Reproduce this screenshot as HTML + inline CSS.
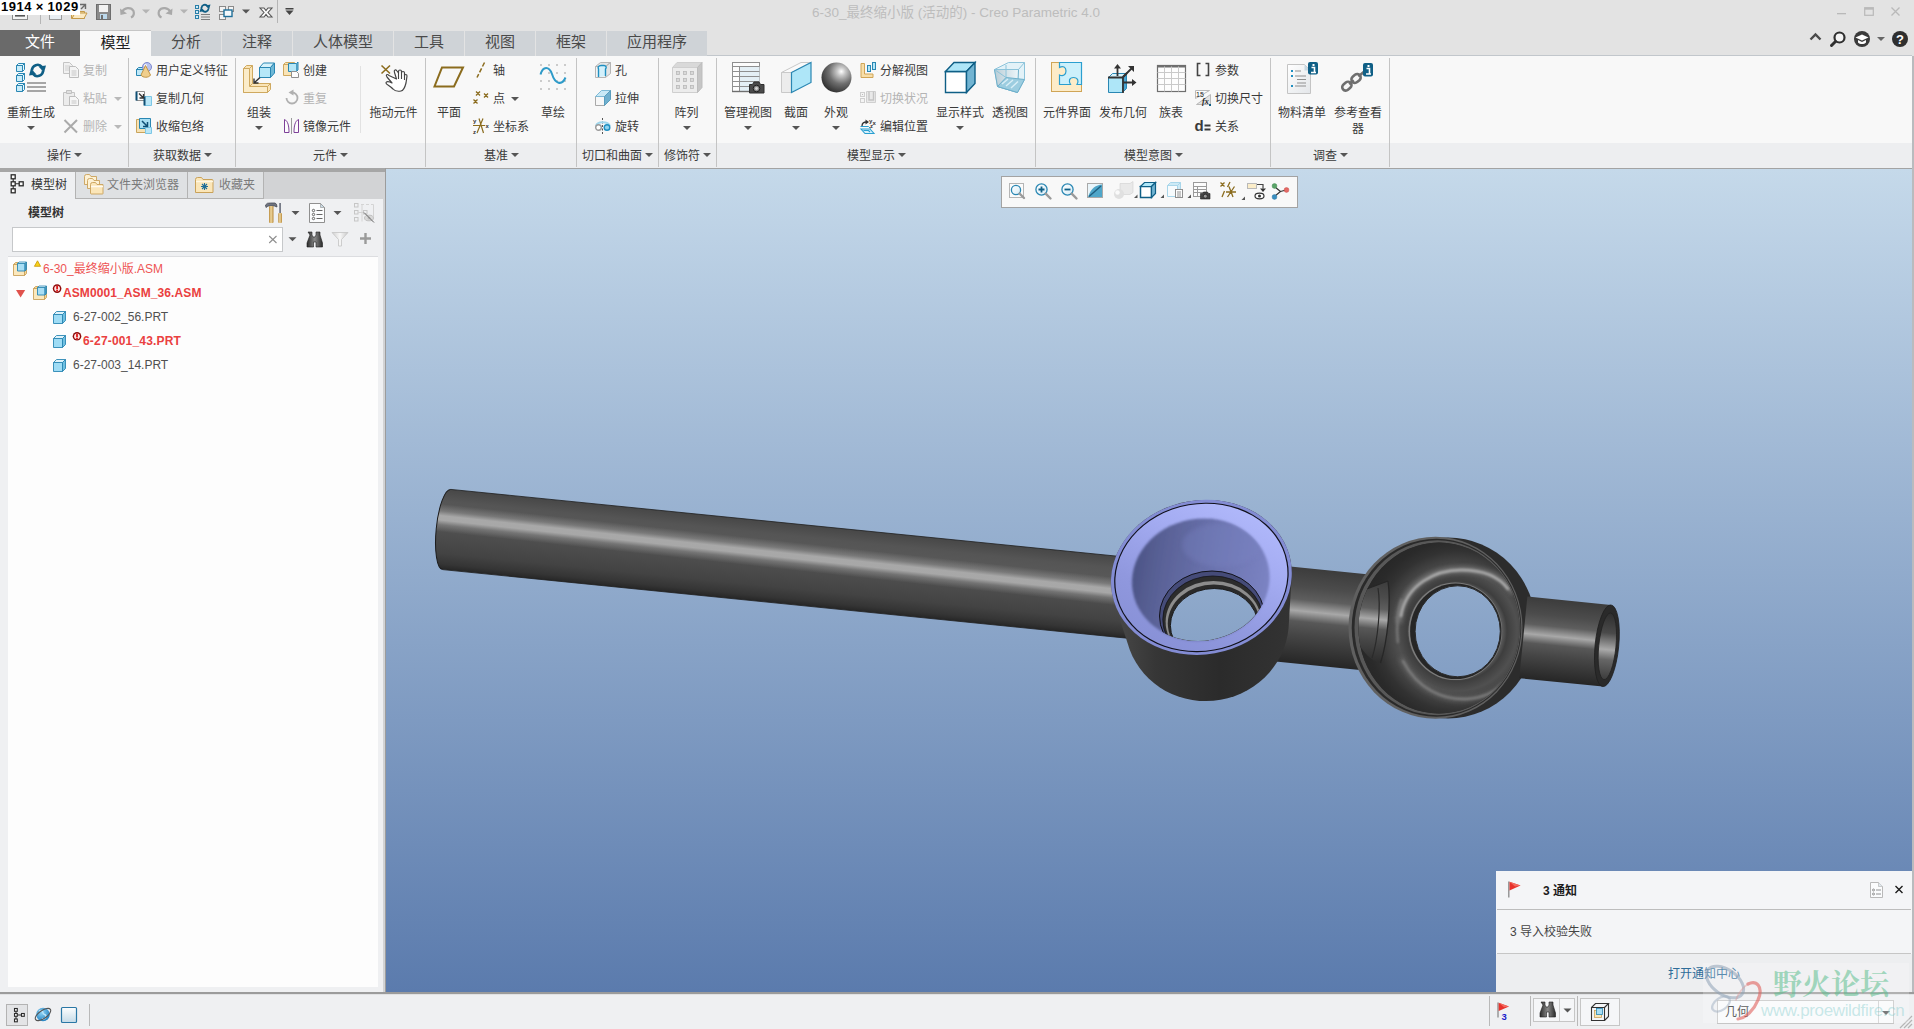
<!DOCTYPE html>
<html lang="zh-CN">
<head>
<meta charset="utf-8">
<title>6-30_最终缩小版 (活动的) - Creo Parametric 4.0</title>
<style>
*{box-sizing:border-box;margin:0;padding:0}
html,body{width:1914px;height:1029px;overflow:hidden;background:#e3e3e3}
body{position:relative;font-family:"Liberation Sans","Noto Sans CJK SC",sans-serif;font-size:12px;color:#333;line-height:1}
.abs{position:absolute}
.t{position:absolute;white-space:nowrap;font-size:12px;line-height:14px;color:#3a3a3a}
.dis{color:#b4b4b4}
svg{position:absolute;overflow:visible}
#titlebar{left:0;top:0;width:1914px;height:30px;background:#e3e3e3}
#tabbar{left:0;top:30px;width:1914px;height:26px;background:#e3e3e3}
.tab{position:absolute;top:31px;height:25px;background:#cfd3d7;font-size:15px;line-height:22px;text-align:center;color:#4a4a4a}
#ribbon{left:0;top:56px;width:1912px;height:87px;background:#f8f8f8}
#riblabel{left:0;top:143px;width:1912px;height:25px;background:#edeef0}
.gsep{position:absolute;top:58px;width:1px;height:109px;background:#c4c4c4}
.glab{position:absolute;top:148px;font-size:12px;line-height:14px;color:#3a3a3a;white-space:nowrap}
.arr{position:absolute;width:0;height:0;border-left:4px solid transparent;border-right:4px solid transparent;border-top:4px solid #555}
.arr.d{border-top-color:#b9b9b9}
#leftpanel{left:0;top:168px;width:386px;height:825px;background:#eff0f2}
#viewport{left:386px;top:169px;width:1526px;height:823px;background:linear-gradient(#c5d9ea 0%,#5b7bad 100%)}
#status{left:0;top:994px;width:1914px;height:35px;background:#eff0f2}
</style>
</head>
<body>
<div class="abs" id="titlebar"></div>
<div class="abs" id="tabbar"></div>
<div class="abs" id="ribbon"></div>
<div class="abs" id="riblabel"></div>
<div class="abs" id="leftpanel"></div>
<div class="abs" id="viewport"></div>
<div class="abs" id="status"></div>
<!-- title bar -->
<div class="t" style="left:812px;top:5px;width:288px;font-size:13.500px;line-height:15px;color:#bdbdbd;text-align:center;letter-spacing:0px">6-30_最终缩小版 (活动的) - Creo Parametric 4.0</div>
<svg style="left:0;top:0" width="300" height="30" viewBox="0 0 300 30">
  <!-- creo icon remnant -->
  <rect x="12.5" y="6.5" width="15" height="13" fill="#f4f4f4" stroke="#8a8a8a"/>
  <rect x="15" y="15" width="10" height="1.6" fill="#555"/>
  <rect x="40" y="4" width="1" height="20" fill="#b5b5b5"/>
  <!-- new -->
  <rect x="49.5" y="4.500" width="12" height="15" fill="#e8eef3" stroke="#9a9a9a"/>
  <!-- open folder -->
  <path d="M71.500 18.500 L71.500 9.500 L76 9.500 L77.500 11.500 L84.500 11.500 L84.500 18.500 Z" fill="#f3d9a0" stroke="#c49a4a"/>
  <path d="M72 18.500 L75 13 L87 13 L84 18.500 Z" fill="#fbeac4" stroke="#c49a4a"/>
  <path d="M80 4.500 L85.500 4.500 L85.500 9 M85.500 4.500 L81 9" stroke="#6a6a6a" stroke-width="1.400" fill="none"/>
  <!-- save -->
  <rect x="96.500" y="4.500" width="14" height="15" fill="#8a8a8a" stroke="#6e6e6e"/>
  <rect x="99" y="5" width="9" height="7" fill="#f2f2f2"/>
  <rect x="100" y="14" width="7" height="5" fill="#bcd9ec"/>
  <rect x="101" y="15" width="2" height="4" fill="#6e6e6e"/>
  <!-- undo -->
  <path d="M122 12 C124 7.500 131 6.500 133.500 11 C134.500 14 133 16.500 131 17.500" fill="none" stroke="#a9a9a9" stroke-width="2.200"/>
  <path d="M120 8.500 L120.500 15 L127 13.500 Z" fill="#a9a9a9"/>
  <path d="M142 9.500 L150 9.500 L146 13.500 Z" fill="#b4b4b4"/>
  <!-- redo -->
  <path d="M170.500 12 C168.500 7.500 161.500 6.500 159 11 C158 14 159.500 16.500 161.500 17.500" fill="none" stroke="#a9a9a9" stroke-width="2.200"/>
  <path d="M172.500 8.500 L172 15 L165.500 13.500 Z" fill="#a9a9a9"/>
  <path d="M180 9.500 L188 9.500 L184 13.500 Z" fill="#b4b4b4"/>
  <!-- regenerate -->
  <rect x="195.500" y="5.500" width="3" height="3" fill="#cfeaf7" stroke="#2a7fa8"/>
  <rect x="195.500" y="10.500" width="3" height="3" fill="#cfeaf7" stroke="#2a7fa8"/>
  <rect x="195.500" y="15.500" width="3" height="3" fill="#cfeaf7" stroke="#2a7fa8"/>
  <path d="M201.500 8 A3.400 3.400 0 0 1 207.500 6 M208.500 8.500 A3.400 3.400 0 0 1 202.500 10.500" stroke="#0f5f86" stroke-width="1.800" fill="none"/>
  <path d="M205.500 5.500 L210.500 4.500 L209 9.500 Z M204.500 11 L199.500 12 L201 7 Z" fill="#0f5f86"/>
  <path d="M201 14.500 H210 M201 17 H210 M201 19.500 H210" stroke="#7d7d7d" stroke-width="1"/>
  <!-- windows -->
  <rect x="219.500" y="6.500" width="6" height="5" fill="#f4f4f4" stroke="#8a8a8a"/>
  <rect x="219.500" y="14.500" width="6" height="5" fill="#f4f4f4" stroke="#8a8a8a"/>
  <rect x="228.500" y="6.500" width="5" height="5" fill="#f4f4f4" stroke="#8a8a8a"/>
  <rect x="224" y="10" width="8" height="6.500" fill="#f4f9fc" stroke="#1f6f99" stroke-width="1.400"/>
  <path d="M242 9.500 L250 9.500 L246 13.500 Z" fill="#555"/>
  <!-- close -->
  <path d="M260 8 L264 8 L266 10.500 L268 8 L272 8 L268 12.500 L272 17 L268 17 L266 14.500 L264 17 L260 17 L264 12.500 Z" fill="#fdfdfd" stroke="#555" stroke-width="1.100"/>
  <rect x="277" y="0" width="1" height="23" fill="#b5b5b5"/>
  <rect x="285.500" y="8" width="8" height="1.500" fill="#444"/>
  <path d="M285.500 10.500 L293.500 10.500 L289.500 15 Z" fill="#444"/>
</svg>
<!-- window controls -->
<svg style="left:1830px;top:0" width="84" height="30" viewBox="0 0 84 30">
  <rect x="7" y="13" width="9" height="1.300" fill="#b9b9b9"/>
  <rect x="34.700" y="7.700" width="8.600" height="7.600" fill="none" stroke="#b9b9b9" stroke-width="1.200"/>
  <rect x="34.700" y="7.700" width="8.600" height="2" fill="#b9b9b9"/>
  <path d="M61.500 7.500 L69.500 15.500 M69.500 7.500 L61.500 15.500" stroke="#b9b9b9" stroke-width="1.300"/>
</svg>
<!-- right-side help icons -->
<svg style="left:1800px;top:28px" width="114" height="26" viewBox="0 0 114 26">
  <path d="M10.500 11.500 L15.500 6.500 L20.500 11.500" stroke="#4a4a4a" stroke-width="2.400" fill="none"/>
  <circle cx="39.500" cy="9.500" r="5" fill="#f4f4f4" stroke="#2f2f2f" stroke-width="2.200"/>
  <path d="M35.500 13.500 L31.500 17.500" stroke="#2f2f2f" stroke-width="3" stroke-linecap="round"/>
  <circle cx="62" cy="11" r="8" fill="#3a3a3a"/>
  <path d="M55.500 9.500 L62 6.500 L68.500 9.500 L62 12.500 Z" fill="#fff"/>
  <path d="M58 12 L58 14.500 C60 16.500 64 16.500 66 14.500 L66 12 L62 14 Z" fill="#fff"/>
  <path d="M77 9 L85 9 L81 13 Z" fill="#666"/>
  <circle cx="100" cy="11" r="8" fill="#2f2f2f"/>
  <text x="100" y="15.500" font-family="Liberation Sans,sans-serif" font-weight="bold" font-size="13" fill="#fff" text-anchor="middle">?</text>
</svg>

<!-- ribbon tabs -->
<div class="tab" style="left:0;top:30px;height:26px;width:80px;background:#6a6a6a;color:#fff;line-height:24px">文件</div>
<div class="tab" style="left:80px;top:30px;height:26px;width:71px;background:#f8f8f8;color:#222;border-top:1px solid #c6c6c6;line-height:23px">模型</div>
<div class="tab" style="left:151px;width:70px">分析</div>
<div class="tab" style="left:222px;width:70px">注释</div>
<div class="tab" style="left:293px;width:100px">人体模型</div>
<div class="tab" style="left:394px;width:70px">工具</div>
<div class="tab" style="left:465px;width:70px">视图</div>
<div class="tab" style="left:536px;width:70px">框架</div>
<div class="tab" style="left:607px;width:100px">应用程序</div>
<div class="abs" style="left:707px;top:55px;width:1205px;height:1px;background:#c2c7cc"></div>
<div class="abs" style="left:1912px;top:56px;width:2px;height:937px;background:#b9bbbe"></div>
<div class="abs" style="left:0;top:168px;width:1912px;height:1px;background:#a3a3a3"></div>

<div class="gsep" style="left:128px"></div>
<div class="gsep" style="left:235px"></div>
<div class="gsep" style="left:425px"></div>
<div class="gsep" style="left:576px"></div>
<div class="gsep" style="left:658px"></div>
<div class="gsep" style="left:716px"></div>
<div class="gsep" style="left:1035px"></div>
<div class="gsep" style="left:1270px"></div>
<div class="gsep" style="left:1389px"></div>
<div class="abs" style="left:360px;top:66px;width:1px;height:67px;background:#e2e2e2"></div>
<div class="t " style="left:47px;top:149px;">操作</div>
<div class="arr " style="left:74px;top:153px"></div>
<div class="t " style="left:153px;top:149px;">获取数据</div>
<div class="arr " style="left:204px;top:153px"></div>
<div class="t " style="left:313px;top:149px;">元件</div>
<div class="arr " style="left:340px;top:153px"></div>
<div class="t " style="left:484px;top:149px;">基准</div>
<div class="arr " style="left:511px;top:153px"></div>
<div class="t " style="left:582px;top:149px;">切口和曲面</div>
<div class="arr " style="left:645px;top:153px"></div>
<div class="t " style="left:664px;top:149px;">修饰符</div>
<div class="arr " style="left:703px;top:153px"></div>
<div class="t " style="left:847px;top:149px;">模型显示</div>
<div class="arr " style="left:898px;top:153px"></div>
<div class="t " style="left:1124px;top:149px;">模型意图</div>
<div class="arr " style="left:1175px;top:153px"></div>
<div class="t " style="left:1313px;top:149px;">调查</div>
<div class="arr " style="left:1340px;top:153px"></div>
<svg style="left:15px;top:62px" width="32" height="32" viewBox="0 0 32 32">
<g fill="#c9ecf9" stroke="#2a87b3" stroke-width="1"><path d="M1.500 3.500h6v6h-6z"/><path d="M1.500 3.500l2-2h6l-2 2z M7.500 3.500l2-2v6l-2 2z" fill="#e9f7fc"/>
<path d="M1.500 13.500h6v6h-6z"/><path d="M1.500 13.500l2-2h6l-2 2z M7.500 13.500l2-2v6l-2 2z" fill="#e9f7fc"/>
<path d="M1.500 23.500h6v6h-6z"/><path d="M1.500 23.500l2-2h6l-2 2z M7.500 23.500l2-2v6l-2 2z" fill="#e9f7fc"/></g>
<path d="M17 8.500 A5.600 5.600 0 0 1 27 5" fill="none" stroke="#0f5f86" stroke-width="2.600"/>
<path d="M23.500 4.500 L31 3.500 L29 10.500 Z" fill="#0f5f86"/>
<path d="M28 8.500 A5.600 5.600 0 0 1 18 12" fill="none" stroke="#0f5f86" stroke-width="2.600"/>
<path d="M21.500 12.500 L14 13.500 L16 6.500 Z" fill="#0f5f86"/>
<path d="M12 21h19M12 25h19M12 29h19" stroke="#8a8a8a" stroke-width="1.600"/></svg>
<div class="t " style="left:-9.0px;top:106px;width:80px;text-align:center">重新生成</div>
<div class="arr " style="left:27px;top:126px"></div>
<svg style="left:63px;top:62px" width="16" height="16" viewBox="0 0 16 16"><path d="M0.500 0.500h6l3 3v8h-9z" fill="#f1f1f1" stroke="#c4c4c4"/><path d="M2 4h5M2 6h5M2 8h5" stroke="#d0d0d0"/>
<path d="M6.500 4.500h6l3 3v8h-9z" fill="#f4f4f4" stroke="#bdbdbd"/><path d="M8.500 9h5M8.500 11h5M8.500 13h5" stroke="#c6c6c6"/></svg>
<div class="t dis" style="left:83px;top:64px;">复制</div>
<svg style="left:63px;top:90px" width="16" height="16" viewBox="0 0 16 16"><path d="M0.500 2.500h11v13h-11z" fill="#ececec" stroke="#c4c4c4"/><path d="M3.500 0.500h5v3h-5z" fill="#e0e0e0" stroke="#c0c0c0"/>
<path d="M6.500 6.500h6l3 3v6h-9z" fill="#f6f6f6" stroke="#bdbdbd"/><path d="M8.500 11h5M8.500 13h5" stroke="#c6c6c6"/></svg>
<div class="t dis" style="left:83px;top:92px;">粘贴</div>
<div class="arr d" style="left:114px;top:97px"></div>
<svg style="left:63px;top:118px" width="16" height="16" viewBox="0 0 16 16"><path d="M1.500 2 L14 14.500 M14 2 L1.500 14.500" stroke="#aaaaaa" stroke-width="2"/></svg>
<div class="t dis" style="left:83px;top:120px;">删除</div>
<div class="arr d" style="left:114px;top:125px"></div>
<svg style="left:136px;top:62px" width="16" height="16" viewBox="0 0 16 16"><path d="M0.500 7.500h7v6h-7z M0.500 7.500l2-2h7l-2 2z M7.500 7.500l2-2v6l-2 2z" fill="#bfe8f8" stroke="#2a87b3"/>
<circle cx="11" cy="5" r="4.500" fill="#b9c2ee" stroke="#7d88cf"/><circle cx="9.500" cy="3.500" r="1.500" fill="#fff" opacity=".8"/>
<path d="M9.500 3.500 L5 13 C6.500 16 13 16 14.500 13 Z" fill="#f0cf8d" stroke="#c19545"/></svg>
<div class="t " style="left:156px;top:64px;">用户定义特征</div>
<svg style="left:136px;top:90px" width="16" height="16" viewBox="0 0 16 16"><path d="M0.500 1.500h8v9h-8z" fill="#fafafa" stroke="#8f8f8f"/><path d="M0.500 1.500v9" stroke="#0f4f74" stroke-width="2"/>
<path d="M8.500 6.500h7v9h-7z" fill="#b9e6f7" stroke="#7cc7e6"/><path d="M8.500 6.500v9" stroke="#0f4f74" stroke-width="2"/>
<path d="M3 3.500l4 4M7.500 4v4h-4" stroke="#333" stroke-width="1.300" fill="none"/></svg>
<div class="t " style="left:156px;top:92px;">复制几何</div>
<svg style="left:136px;top:118px" width="16" height="16" viewBox="0 0 16 16"><path d="M0.500 1.500h10v13h-10z" fill="#f7e2b4" stroke="#c9a45c"/>
<path d="M3.500 0.500h11v10h-11z" fill="#a9dff3" stroke="#2a87b3"/><path d="M9.500 9.500h6v6h-6z" fill="#b9e6f7" stroke="#7cc7e6"/>
<path d="M6 3l5 5M11.500 4v4.500h-4.500" stroke="#0f4f74" stroke-width="1.500" fill="none"/></svg>
<div class="t " style="left:156px;top:120px;">收缩包络</div>
<svg style="left:243px;top:62px" width="32" height="32" viewBox="0 0 32 32"><path d="M0.500 6.500 L3.500 3.500 L9.500 3.500 L9.500 21.500 L27.500 21.500 L27.500 27.500 L24.500 30.500 L0.500 30.500 Z" fill="#f9e4b7" stroke="#cfa95f"/>
<path d="M0.500 6.500h6v18h18v6 M6.500 6.500l3-3 M6.500 24.500l3-3 M24.500 24.500l3-3" fill="none" stroke="#cfa95f"/>
<path d="M6.500 6.500v18h18v6h-24v-24z" fill="#fbecc9" stroke="#cfa95f"/>
<path d="M16.500 5.500h11v10h-11z" fill="#b5e7f8" stroke="#2a87b3"/><path d="M16.500 5.500l4-4.500h11l-4 4.500z" fill="#d6f2fb" stroke="#2a87b3"/><path d="M27.500 5.500l4-4.500v10l-4 4.500z" fill="#6fb8d6" stroke="#2a87b3"/>
<path d="M17 15.500 L11.500 20.500 M11 16.500 v4.500 h4.500" stroke="#333" stroke-width="1.400" fill="none"/></svg>
<div class="t " style="left:219.0px;top:106px;width:80px;text-align:center">组装</div>
<div class="arr " style="left:255px;top:126px"></div>
<svg style="left:283px;top:62px" width="16" height="16" viewBox="0 0 16 16"><path d="M0.500 2.500h9v11h-9z M0.500 2.500l2-2h9l-2 2" fill="#f9e4b7" stroke="#cfa95f"/>
<path d="M5.500 1.500h8v8h-8z" fill="#b5e7f8" stroke="#2a87b3"/><path d="M13.500 1.500l1.500-1.500v8l-1.500 1.500" fill="#6fb8d6" stroke="#2a87b3"/>
<path d="M8.500 9.500h5l2 2v4h-7z" fill="#fdfdfd" stroke="#8f8f8f"/></svg>
<div class="t " style="left:303px;top:64px;">创建</div>
<svg style="left:284px;top:90px" width="16" height="16" viewBox="0 0 16 16"><path d="M8 2.500 A5.500 5.500 0 1 1 2.500 8" fill="none" stroke="#b0b0b0" stroke-width="1.800"/><path d="M9.500 -0.500 L9.500 5.500 L4.500 2.500Z" fill="#b0b0b0"/></svg>
<div class="t dis" style="left:303px;top:92px;">重复</div>
<svg style="left:284px;top:118px" width="16" height="16" viewBox="0 0 16 16"><path d="M0.500 1.500 C4 3 5 8 5 14.500 L0.500 14.500 Z" fill="#fdfdfd" stroke="#7d3f98"/><path d="M14.500 1.500 C11 3 10 8 10 14.500 L14.500 14.500 Z" fill="#fdfdfd" stroke="#7d3f98"/><path d="M7.500 0v16" stroke="#9a9a9a"/></svg>
<div class="t " style="left:303px;top:120px;">镜像元件</div>
<svg style="left:378px;top:62px" width="32" height="32" viewBox="0 0 32 32"><path d="M3.500 3.500 L12 11.500 M12 3.500 L3.500 11.500" stroke="#8b6c1e" stroke-width="1.600"/>
<path d="M11 13.500 C9 11.500 7.500 13 9 15 L14 21 C11 19.500 8 19 8 21 C8 22.500 12 23.500 15 27 C17 29.500 20 29.500 23 29 C26 28.500 27 25 28 21 L29 14 C29 12 26.500 12 26.500 14 L26.500 11 C26.500 9 23.500 9 23.500 11 L23.500 9.500 C23.500 7.500 20.500 7.500 20.500 9.500 L20.500 11 L19 9 C18 7 15.500 8 16.500 10.500 L18.500 17 Z" fill="#fff" stroke="#444" stroke-width="1.200" stroke-linejoin="round"/>
<path d="M20.500 11v6 M23.500 11v6 M26.500 14v4" stroke="#444" stroke-width="1.100"/></svg>
<div class="t " style="left:353.5px;top:106px;width:80px;text-align:center">拖动元件</div>
<svg style="left:433px;top:62px" width="32" height="32" viewBox="0 0 32 32"><path d="M9 5.500 L30 5.500 L21 24.500 L1.500 24.500 Z" fill="none" stroke="#8b6c1e" stroke-width="2"/></svg>
<div class="t " style="left:409.0px;top:106px;width:80px;text-align:center">平面</div>
<svg style="left:473px;top:62px" width="16" height="16" viewBox="0 0 16 16"><path d="M11.500 0.500 L4 15.500" stroke="#8b6c1e" stroke-width="1.500" stroke-dasharray="4.500 2"/></svg>
<div class="t " style="left:493px;top:64px;">轴</div>
<svg style="left:473px;top:90px" width="16" height="16" viewBox="0 0 16 16"><path d="M3 1.500l4 4m0-4l-4 4 M11 3.500l4 4m0-4l-4 4 M0.500 9.500l4 4m0-4l-4 4" stroke="#8b6c1e" stroke-width="1.300"/></svg>
<div class="t " style="left:493px;top:92px;">点</div>
<div class="arr " style="left:511px;top:97px"></div>
<svg style="left:473px;top:118px" width="16" height="16" viewBox="0 0 16 16"><path d="M0 7.500h12 M4 15 L10 0.500 M6 0.500 L10.500 15" stroke="#8b6c1e" stroke-width="1.200"/>
<text x="0" y="5" font-size="6" font-family="Liberation Sans" font-weight="bold" fill="#333">y</text><text x="12.500" y="10" font-size="6" font-family="Liberation Sans" font-weight="bold" fill="#333">x</text><text x="0" y="15.500" font-size="6" font-family="Liberation Sans" font-weight="bold" fill="#333">z</text></svg>
<div class="t " style="left:493px;top:120px;">坐标系</div>
<svg style="left:539px;top:62px" width="30" height="30" viewBox="0 0 30 30"><rect x="1.5" y="2.5" width="1" height="1" fill="#444"/><rect x="1.5" y="10.5" width="1" height="1" fill="#444"/><rect x="1.5" y="18.5" width="1" height="1" fill="#444"/><rect x="1.5" y="26.5" width="1" height="1" fill="#444"/><rect x="9.5" y="2.5" width="1" height="1" fill="#444"/><rect x="9.5" y="10.5" width="1" height="1" fill="#444"/><rect x="9.5" y="18.5" width="1" height="1" fill="#444"/><rect x="9.5" y="26.5" width="1" height="1" fill="#444"/><rect x="17.5" y="2.5" width="1" height="1" fill="#444"/><rect x="17.5" y="10.5" width="1" height="1" fill="#444"/><rect x="17.5" y="18.5" width="1" height="1" fill="#444"/><rect x="17.5" y="26.5" width="1" height="1" fill="#444"/><rect x="25.5" y="2.5" width="1" height="1" fill="#444"/><rect x="25.5" y="10.5" width="1" height="1" fill="#444"/><rect x="25.5" y="18.5" width="1" height="1" fill="#444"/><rect x="25.5" y="26.5" width="1" height="1" fill="#444"/><path d="M1.500 12.500 C4 4 10 4 13 12 C16 22 23 24 26.500 15.500" fill="none" stroke="#2e9bc9" stroke-width="2"/></svg>
<div class="t " style="left:513.0px;top:106px;width:80px;text-align:center">草绘</div>
<svg style="left:595px;top:62px" width="16" height="16" viewBox="0 0 16 16"><path d="M0.500 4.500h10v11h-10z" fill="#f4f4f4" stroke="#b5b5b5"/><path d="M0.500 4.500l5-4h10l-5 4z M10.500 4.500l5-4v11l-5 4z" fill="#e4e4e4" stroke="#b5b5b5"/>
<path d="M3.500 15 V7 C2.500 5.500 3.500 3.500 6 3.500 H9 C11 3.500 12 5.500 10.500 7 V14" fill="#d3f0fb" stroke="#1f8fc1" stroke-width="1.400"/></svg>
<div class="t " style="left:615px;top:64px;">孔</div>
<svg style="left:595px;top:90px" width="16" height="16" viewBox="0 0 16 16"><path d="M0.500 6.500h9v9h-9z" fill="#f7f7f7" stroke="#a9a9a9"/><path d="M0.500 6.500l6-6h9l-6 6z" fill="#c9e9f6" stroke="#7fbad6"/><path d="M9.500 6.500l6-6v9l-6 6z" fill="#6fb0cf" stroke="#5a9dbd"/></svg>
<div class="t " style="left:615px;top:92px;">拉伸</div>
<svg style="left:595px;top:118px" width="16" height="16" viewBox="0 0 16 16"><path d="M7.500 0v16" stroke="#555" stroke-dasharray="2 1.500"/><path d="M1 8 C2 3 13 3 15 8" fill="none" stroke="#9fd6ec" stroke-width="2"/>
<circle cx="3.500" cy="9.500" r="2.800" fill="#fff" stroke="#9a9a9a" stroke-width="1.400"/><circle cx="12" cy="9.500" r="2.800" fill="#8fd3ee" stroke="#1f8fc1" stroke-width="1.400"/></svg>
<div class="t " style="left:615px;top:120px;">旋转</div>
<svg style="left:672px;top:62px" width="31" height="31" viewBox="0 0 31 31"><path d="M0.500 5.500h25v25h-25z" fill="#ececec" stroke="#cfcfcf"/><path d="M0.500 5.500l4.500-5h25l-4.500 5z" fill="#d9d9d9" stroke="#cfcfcf"/><path d="M25.500 5.500l4.500-5v25l-4.500 5z" fill="#c6c6c6" stroke="#bdbdbd"/><rect x="4.5" y="9.5" width="3" height="3" fill="#d9d9d9" stroke="#b9b9b9" stroke-width=".8"/><rect x="4.5" y="16.5" width="3" height="3" fill="#d9d9d9" stroke="#b9b9b9" stroke-width=".8"/><rect x="4.5" y="23.5" width="3" height="3" fill="#d9d9d9" stroke="#b9b9b9" stroke-width=".8"/><rect x="11.5" y="9.5" width="3" height="3" fill="#d9d9d9" stroke="#b9b9b9" stroke-width=".8"/><rect x="11.5" y="16.5" width="3" height="3" fill="#d9d9d9" stroke="#b9b9b9" stroke-width=".8"/><rect x="11.5" y="23.5" width="3" height="3" fill="#d9d9d9" stroke="#b9b9b9" stroke-width=".8"/><rect x="18.5" y="9.5" width="3" height="3" fill="#d9d9d9" stroke="#b9b9b9" stroke-width=".8"/><rect x="18.5" y="16.5" width="3" height="3" fill="#d9d9d9" stroke="#b9b9b9" stroke-width=".8"/><rect x="18.5" y="23.5" width="3" height="3" fill="#d9d9d9" stroke="#b9b9b9" stroke-width=".8"/></svg>
<div class="t " style="left:646.5px;top:106px;width:80px;text-align:center">阵列</div>
<div class="arr " style="left:683px;top:126px"></div>
<svg style="left:732px;top:62px" width="33" height="33" viewBox="0 0 33 33"><rect x="0.500" y="0.500" width="27" height="29" fill="#fcfcfc" stroke="#8f8f8f"/><rect x="8" y="4.500" width="19.500" height="25" fill="#e4eff5"/>
<path d="M0.500 4.500h27M0.500 9.500h27M0.500 14.500h27M0.500 19.500h27M0.500 24.500h27M7.500 4.500v25" stroke="#8f8f8f"/><path d="M0 29.500h28" stroke="#6f6f6f" stroke-width="1.400"/>
<path d="M17.500 22.500h3l1.500-2.500h5l1.500 2.500h3.500v8.500h-14.500z" fill="#4a4a4a" stroke="#2f2f2f"/><circle cx="24.500" cy="26.500" r="3.300" fill="#8a8a8a" stroke="#1f1f1f"/><circle cx="24.500" cy="26.500" r="1.400" fill="#d5d5d5"/></svg>
<div class="t " style="left:708.0px;top:106px;width:80px;text-align:center">管理视图</div>
<div class="arr " style="left:744px;top:126px"></div>
<svg style="left:781px;top:62px" width="31" height="31" viewBox="0 0 31 31"><path d="M0.500 10.500h10v20h-10z" fill="#ececec" stroke="#c9c9c9"/><path d="M0.500 10.500l19.500-10h10l-19.500 10z" fill="#fafafa" stroke="#c9c9c9"/>
<path d="M10.500 10.500l19.500-10v20l-19.500 10z" fill="#aee6f8" stroke="#2a87b3" stroke-width="1.200"/></svg>
<div class="t " style="left:756.0px;top:106px;width:80px;text-align:center">截面</div>
<div class="arr " style="left:792px;top:126px"></div>
<svg style="left:821px;top:62px" width="31" height="31" viewBox="0 0 31 31"><defs><radialGradient id="sph" cx="66%" cy="30%" r="75%"><stop offset="0" stop-color="#ffffff"/><stop offset=".18" stop-color="#c9c9c9"/><stop offset=".55" stop-color="#6f6f6f"/><stop offset="1" stop-color="#2f2f2f"/></radialGradient></defs><circle cx="15.500" cy="15.500" r="15" fill="url(#sph)"/></svg>
<div class="t " style="left:796.0px;top:106px;width:80px;text-align:center">外观</div>
<div class="arr " style="left:832px;top:126px"></div>
<svg style="left:860px;top:62px" width="16" height="16" viewBox="0 0 16 16"><path d="M1 1.500h3.500v10.500h8.500v3.500h-12z" fill="#f7deaa" stroke="#d0a556"/><rect x="7.500" y="3.500" width="3" height="6" fill="#b5e7f8" stroke="#2a87b3"/><rect x="12.500" y="0.500" width="3" height="7" fill="#b5e7f8" stroke="#2a87b3"/></svg>
<div class="t " style="left:880px;top:64px;">分解视图</div>
<svg style="left:860px;top:90px" width="16" height="16" viewBox="0 0 16 16"><rect x="0.500" y="2.500" width="4" height="4" fill="#f4f4f4" stroke="#cfcfcf"/><rect x="0.500" y="8.500" width="4" height="4" fill="#f4f4f4" stroke="#cfcfcf"/><rect x="2" y="4" width="1" height="1" fill="#bdbdbd"/>
<path d="M6.500 1.500h9v11h-9z" fill="#e9e9e9" stroke="#d0d0d0"/><path d="M9 1.500v8.500h4.500v-8.500" fill="none" stroke="#c4c4c4" stroke-width="1.400"/></svg>
<div class="t dis" style="left:880px;top:92px;">切换状况</div>
<svg style="left:860px;top:118px" width="16" height="16" viewBox="0 0 16 16"><path d="M1 11h9l4 4.500h-9z M3.500 12.500h5l1.500 1.500" fill="#d6f0fb" stroke="#2a9fd0" stroke-width="1.100"/><path d="M0.500 8.500h8l2 2" fill="none" stroke="#2a9fd0"/>
<path d="M2 8 C2 5 4 4 6.500 4" fill="none" stroke="#333" stroke-width="1.300"/><path d="M5.500 1.500 L9 4 L5.500 6.500Z" fill="#333"/>
<text x="9" y="4.500" font-size="6" font-family="Liberation Sans" font-weight="bold" fill="#333">y</text><text x="12.500" y="7" font-size="6" font-family="Liberation Sans" font-weight="bold" fill="#333">x</text><text x="10" y="10" font-size="6" font-family="Liberation Sans" font-weight="bold" fill="#333">z</text></svg>
<div class="t " style="left:880px;top:120px;">编辑位置</div>
<svg style="left:945px;top:62px" width="31" height="31" viewBox="0 0 31 31"><path d="M0.500 9.500h21v21h-21z" fill="#ffffff" stroke="#0f5f86" stroke-width="1.400"/><path d="M0.500 9.500l8.500-9h21l-8.500 9z" fill="#aee6f8" stroke="#0f5f86" stroke-width="1.400"/><path d="M21.500 9.500l8.500-9v21l-8.500 9z" fill="#72b4d2" stroke="#0f5f86" stroke-width="1.400"/></svg>
<div class="t " style="left:920.0px;top:106px;width:80px;text-align:center">显示样式</div>
<div class="arr " style="left:956px;top:126px"></div>
<svg style="left:994px;top:62px" width="32" height="32" viewBox="0 0 32 32"><defs><linearGradient id="pv1" x1="0" y1="0" x2="1" y2="0"><stop offset="0" stop-color="#b9cdd6"/><stop offset="1" stop-color="#edf6fa"/></linearGradient></defs>
<path d="M0.500 7.500 L14.500 0.500 L30.500 0.500 L30.500 17.500 L23.500 30.500 L3.500 24.500 Z" fill="#e3f2f8" stroke="#8cc3da"/>
<path d="M0.500 7.500 L24.500 7.500 L23.500 30.500 L3.500 24.500Z" fill="url(#pv1)" stroke="#6fb0cb"/><path d="M3.500 24.500 L12 15.500 L30.500 17.500 L23.500 30.500Z" fill="#9ccde0" stroke="#6fb0cb"/>
<path d="M12 15.500 L12 3 M12 15.500 L0.500 7.500 M24.500 7.500 L30.500 0.500 M24.500 7.500 L0.500 7.500" fill="none" stroke="#8cc3da"/><path d="M8 22l6-5 M12 24l7-6 M17 26l7-6.500" stroke="#d9eef6" stroke-width="1.400"/></svg>
<div class="t " style="left:970.0px;top:106px;width:80px;text-align:center">透视图</div>
<svg style="left:1051px;top:62px" width="32" height="32" viewBox="0 0 32 32"><rect x="0.500" y="0.500" width="30" height="29" fill="#fdecc8" stroke="#d0a556"/>
<path d="M8.500 0.500 H30.500 V22.500 H26 C28 19 27 15.500 22.500 15.500 C18 15.500 17.500 19 19.500 22.500 H8.500 V13 C12 14.500 15 13 15 9 C15 5 12 3.500 8.500 5.500 Z" fill="#ccf0fb" stroke="#2a9fd0" stroke-width="1.200"/></svg>
<div class="t " style="left:1027.0px;top:106px;width:80px;text-align:center">元件界面</div>
<svg style="left:1107px;top:62px" width="32" height="32" viewBox="0 0 32 32"><path d="M1.500 15.500h14v15h-14z" fill="#aee6f8" stroke="#2a87b3"/><path d="M1.500 15.500l4-4h14l-4 4z" fill="#d6f2fb" stroke="#2a87b3"/><path d="M15.500 15.500l4-4v15l-4 4z" fill="#49a5d3" stroke="#2a87b3"/>
<path d="M1 15.500h15v15.500 M15.500 15.500l4.500-4.500" fill="none" stroke="#333" stroke-width="1.800"/>
<path d="M10.500 14v-9 M16 15l9-9 M16 20.500h10" stroke="#333" stroke-width="1.800"/><path d="M7 6.500l3.500-4.500l3.500 4.500z M21 4h6v6z M25 17l4.500 3.500l-4.500 3.500z" fill="#333"/></svg>
<div class="t " style="left:1083.0px;top:106px;width:80px;text-align:center">发布几何</div>
<svg style="left:1157px;top:62px" width="30" height="32" viewBox="0 0 30 32"><rect x="0.500" y="3.500" width="28" height="26" fill="#fdfdfd" stroke="#6f6f6f" stroke-width="1.200"/><path d="M0.500 4.500h28" stroke="#6f6f6f" stroke-width="2"/>
<path d="M0.500 10.500h28M0.500 16.500h28M0.500 22.500h28M7.500 4.500v25M14.500 4.500v25M21.500 4.500v25" stroke="#c9c9c9"/></svg>
<div class="t " style="left:1131.0px;top:106px;width:80px;text-align:center">族表</div>
<svg style="left:1196px;top:62px" width="16" height="16" viewBox="0 0 16 16"><path d="M4.500 1.500h-3v12h3 M9.500 1.500h3v12h-3" fill="none" stroke="#444" stroke-width="1.600"/></svg>
<div class="t " style="left:1215px;top:64px;">参数</div>
<svg style="left:1195px;top:90px" width="16" height="16" viewBox="0 0 16 16"><path d="M0.500 0.500h14l-14 8z" fill="#fdfdfd" stroke="#b9b9b9"/><path d="M15.500 4.500v10h-14z" fill="#e3e3e3" stroke="#b9b9b9"/>
<text x="1" y="7" font-size="7" font-family="Liberation Sans" fill="#222">15</text><text x="7" y="13.500" font-size="8" font-style="italic" font-weight="bold" font-family="Liberation Serif" fill="#222">fx</text><rect x="14" y="14" width="2" height="2" fill="#0f5f86"/></svg>
<div class="t " style="left:1215px;top:92px;">切换尺寸</div>
<svg style="left:1195px;top:118px" width="16" height="16" viewBox="0 0 16 16"><text x="-0.500" y="13" font-size="15" font-weight="bold" font-family="Liberation Sans" fill="#3a3a3a">d</text><path d="M9.500 7.500h6M9.500 11.500h6" stroke="#3a3a3a" stroke-width="1.800"/></svg>
<div class="t " style="left:1215px;top:120px;">关系</div>
<svg style="left:1287px;top:62px" width="32" height="32" viewBox="0 0 32 32"><defs><linearGradient id="dg" x1="0" y1="0" x2="1" y2="1"><stop offset="0" stop-color="#ffffff"/><stop offset="1" stop-color="#e3e6e9"/></linearGradient></defs>
<path d="M0.500 2.500h17l6 6v23h-23z" fill="url(#dg)" stroke="#c4c4c4"/><path d="M17.500 2.500v6h6z" fill="#c9d9e3"/>
<path d="M4 9h2M4 14h2M4 24h2" stroke="#1f8fc1" stroke-width="2"/><path d="M8 9h6M8 14h11M10 17.500h9M10 21h9M8 24h11" stroke="#8f8f8f" stroke-width="1.100"/>
<rect x="21" y="0" width="10" height="12.500" rx="2" fill="#0f5f86"/><path d="M24.500 5.500h3v4.500 M24 10.500h5" stroke="#fff" stroke-width="1.600" fill="none"/><rect x="25.500" y="2" width="2" height="2" fill="#fff"/></svg>
<div class="t " style="left:1262.0px;top:106px;width:80px;text-align:center">物料清单</div>
<svg style="left:1342px;top:62px" width="32" height="32" viewBox="0 0 32 32"><g fill="none" stroke="#6f6f6f" stroke-width="2.600" transform="rotate(-40 11 19)"><rect x="-2" y="15.500" width="10" height="7" rx="3.500"/><rect x="10" y="15.500" width="10" height="7" rx="3.500"/><path d="M6 19h6 M18 19h7"/></g>
<rect x="21" y="1" width="10" height="13.500" rx="2" fill="#0f5f86"/><path d="M24.500 6.500h3v5 M24 12h5" stroke="#fff" stroke-width="1.600" fill="none"/><rect x="25.500" y="3" width="2" height="2" fill="#fff"/></svg>
<div class="t" style="left:1318px;top:105px;width:80px;text-align:center;line-height:16px">参考查看<br>器</div>

<!-- left panel -->
<div class="abs" style="left:0;top:168px;width:386px;height:4px;background:#a6a6a6"></div>
<div class="abs" style="left:0;top:172px;width:385px;height:27px;background:#d2d3d5"></div>
<div class="abs" style="left:383px;top:172px;width:2px;height:820px;background:#d2d3d5"></div>
<div class="abs" style="left:385px;top:168px;width:1px;height:825px;background:#9c9c9c"></div>
<div class="abs" style="left:0;top:172px;width:75px;height:28px;background:#eff0f2"></div>
<div class="abs" style="left:75px;top:172px;width:113px;height:27px;background:#dfe1e3;border:1px solid #b3b3b3;border-top:none"></div>
<div class="abs" style="left:187px;top:172px;width:77px;height:27px;background:#dfe1e3;border:1px solid #b3b3b3;border-top:none"></div>
<svg style="left:10px;top:174px" width="16" height="20" viewBox="0 0 16 20">
  <g fill="#fafafa" stroke="#2b2b2b" stroke-width="1.300"><rect x="1.200" y="0.800" width="4" height="4"/><rect x="1.200" y="7.800" width="4" height="4"/><rect x="1.200" y="14.800" width="4" height="4"/><rect x="9.200" y="7.800" width="4" height="4"/></g>
  <path d="M3.200 5v3M3.200 12v3M5.500 9.800h3.500" stroke="#2b2b2b" stroke-width="1.100"/>
</svg>
<div class="t" style="left:31px;top:178px;color:#333">模型树</div>
<svg style="left:84px;top:174px" width="20" height="20" viewBox="0 0 20 20">
  <g stroke="#c9a25a" stroke-width="0.900"><path d="M0.500 10.500v-8q0-2 2-2h3l1.500 2h5.500v8z" fill="#fdf1d4"/><path d="M3.500 14.500v-8q0-2 2-2h3l1.500 2h5.500v8z" fill="#fdf1d4"/><path d="M6.500 19.500v-9q0-2 2-2h3l1.500 2h6v9q0 0.500-0.500 0.500h-11.500z" fill="#fbe6b8"/></g>
  <path d="M7 12.500h12" stroke="#fffaf0" stroke-width="1.500"/>
</svg>
<div class="t" style="left:107px;top:178px;color:#7a7a7a">文件夹浏览器</div>
<svg style="left:195px;top:176px" width="19" height="17" viewBox="0 0 19 17">
  <path d="M0.500 16.500v-13q0-2 2-2h4l1.500 2h9q1 0 1 1v12z" fill="#fbe6b8" stroke="#c9a25a"/><path d="M1 5.500h17" stroke="#fff7e3" stroke-width="1.400"/>
  <path d="M9.500 7v7M6 10.500h7M7 8l5 5M12 8l-5 5" stroke="#1f6f99" stroke-width="1.100"/>
</svg>
<div class="t" style="left:219px;top:178px;color:#7a7a7a">收藏夹</div>
<div class="t" style="left:28px;top:206px;font-weight:bold;color:#333">模型树</div>
<!-- header icons -->
<svg style="left:264px;top:202px" width="112" height="22" viewBox="0 0 112 22">
  <defs><linearGradient id="wood" x1="0" x2="1"><stop offset="0" stop-color="#b8893a"/><stop offset=".45" stop-color="#f1d9a0"/><stop offset="1" stop-color="#b8893a"/></linearGradient></defs>
  <path d="M1.500 3 Q3 0.500 6.500 1 L11 1 Q13 1.500 13 5 L10.500 4 L4 4 L2 5.500 Z" fill="#6f7480" stroke="#4a4d57" stroke-width=".8"/>
  <rect x="5" y="4" width="4.500" height="17" rx="1" fill="url(#wood)"/>
  <rect x="15.200" y="1" width="1.800" height="10" fill="#777c88"/><rect x="14.200" y="11" width="3.800" height="10" rx="1" fill="url(#wood)"/>
  <path d="M27.500 9 L35.500 9 L31.500 13 Z" fill="#555"/>
  <path d="M45.500 1.500h11l4 4v15h-15z" fill="#fbfcfd" stroke="#8f8f8f"/><path d="M56.500 1.500v4h4z" fill="#c9dbe6" stroke="#8f8f8f" stroke-width=".6"/>
  <g fill="none" stroke="#555" stroke-width=".9"><circle cx="49.500" cy="8.500" r="1.200"/><circle cx="49.500" cy="12.500" r="1.200"/><circle cx="49.500" cy="16.500" r="1.200"/><path d="M52.500 8.500h6M52.500 12.500h6M52.500 16.500h6"/></g>
  <path d="M69.500 9 L77.500 9 L73.500 13 Z" fill="#555"/>
  <g fill="none" stroke="#c6c6c6" stroke-width="1"><rect x="90.500" y="1.500" width="3.500" height="3.500"/><rect x="90.500" y="8.500" width="3.500" height="3.500"/><rect x="90.500" y="15.500" width="3.500" height="3.500"/><rect x="99.500" y="8.500" width="3.500" height="3.500"/><path d="M94 10.500h5.500M98 2.500v17M97 2.500h3M102 2.500h3M107 2.500h2.500v12" stroke="#d4d4d4"/></g>
  <ellipse cx="105" cy="16" rx="4.500" ry="2.800" fill="#d9d9d9" stroke="#c2c2c2"/><circle cx="105" cy="16" r="1.500" fill="#bdbdbd"/>
  <path d="M100 10.500 L110 20.500" stroke="#666" stroke-width="1"/>
</svg>
<!-- search row -->
<div class="abs" style="left:12px;top:227px;width:271px;height:25px;background:#fff;border:1px solid #c6c8ca"></div>
<svg style="left:264px;top:228px" width="112" height="22" viewBox="0 0 112 22">
  <defs><linearGradient id="bino" x1="0" x2="1"><stop offset="0" stop-color="#2b2b2b"/><stop offset=".5" stop-color="#8a8a8a"/><stop offset="1" stop-color="#2b2b2b"/></linearGradient>
  <linearGradient id="fun" x1="0" x2="1"><stop offset="0" stop-color="#d0d0d0"/><stop offset=".5" stop-color="#f7f7f7"/><stop offset="1" stop-color="#c8c8c8"/></linearGradient></defs>
  <path d="M5.200 8 L12.500 15 M12.500 8 L5.200 15" stroke="#8f8f8f" stroke-width="1.100"/>
  <path d="M24.500 9.200 L32.500 9.200 L28.500 13.200 Z" fill="#555"/>
  <path d="M44 4h4v3l1 2h2l1-2v-3h4v3l2.500 8v4h-6.500v-5h-2.500v5h-6.500v-4l3-8z" fill="url(#bino)" stroke="#1f1f1f" stroke-width=".6"/>
  <path d="M68 4.500h16l-6.500 7v6.500h-3v-6.500z" fill="url(#fun)" stroke="#c4c4c4" stroke-width=".8"/>
  <path d="M101.500 5v11M96 10.500h11" stroke="#9a9a9a" stroke-width="2.400"/>
</svg>
<!-- tree -->
<div class="abs" style="left:8px;top:256px;width:370px;height:731px;background:#fdfdfd;border-top:1px solid #dcdde0"></div>
<svg style="left:0;top:256px" width="200" height="120" viewBox="0 0 200 120">
  <g transform="translate(13 6)"><path d="M0.500 2.500h11v11h-11z" fill="#fbe8bd" stroke="#c9a25a" stroke-width=".9"/><path d="M0.500 2.500l2-2h11l-2 2z M11.500 2.500l2-2v11l-2 2z" fill="#f3d596" stroke="#c9a25a" stroke-width=".9"/><path d="M4.500 1.500h7.500v7.500h-7.500z" fill="#a9def4" stroke="#2a87b3" stroke-width=".9"/><path d="M4.500 1.500l1.500-1.500h7.500l-1.500 1.500z" fill="#e6f6fc" stroke="#2a87b3" stroke-width=".8"/><path d="M12 1.500l1.500-1.500v7.500l-1.500 1.500z" fill="#4d9fc6" stroke="#2a87b3" stroke-width=".8"/></g>
  <path d="M37.500 4.800 L40.600 10.300 L34.400 10.300 Z" fill="#f7d21a" stroke="#c99400" stroke-width=".8"/>
  <path d="M16 34 L25.200 34 L20.600 41.500 Z" fill="#e0524c"/>
  <g transform="translate(33 30)"><path d="M0.500 2.500h11v11h-11z" fill="#fbe8bd" stroke="#c9a25a" stroke-width=".9"/><path d="M0.500 2.500l2-2h11l-2 2z M11.500 2.500l2-2v11l-2 2z" fill="#f3d596" stroke="#c9a25a" stroke-width=".9"/><path d="M4.500 1.500h7.500v7.500h-7.500z" fill="#a9def4" stroke="#2a87b3" stroke-width=".9"/><path d="M4.500 1.500l1.500-1.500h7.500l-1.500 1.500z" fill="#e6f6fc" stroke="#2a87b3" stroke-width=".8"/><path d="M12 1.500l1.500-1.500v7.500l-1.500 1.500z" fill="#4d9fc6" stroke="#2a87b3" stroke-width=".8"/></g>
  <g transform="translate(52.800 28.300)"><circle cx="4.300" cy="4.300" r="4.300" fill="#8e0a0a"/><circle cx="4.300" cy="4.300" r="2.900" fill="#fde4e4"/><rect x="3.400" y="1.600" width="1.800" height="3.400" fill="#e01818"/><rect x="3.400" y="5.600" width="1.800" height="1.500" fill="#e01818"/></g>
  <g transform="translate(53 55)"><path d="M0.500 3.500h9v9h-9z" fill="#9fdcf5" stroke="#2a87b3" stroke-width=".9"/><path d="M0.500 3.500l3-3h9l-3 3z" fill="#dff3fb" stroke="#2a87b3" stroke-width=".9"/><path d="M9.500 3.500l3-3v9l-3 3z" fill="#6fbfe0" stroke="#2a87b3" stroke-width=".9"/></g>
  <g transform="translate(53 79)"><path d="M0.500 3.500h9v9h-9z" fill="#9fdcf5" stroke="#2a87b3" stroke-width=".9"/><path d="M0.500 3.500l3-3h9l-3 3z" fill="#dff3fb" stroke="#2a87b3" stroke-width=".9"/><path d="M9.500 3.500l3-3v9l-3 3z" fill="#6fbfe0" stroke="#2a87b3" stroke-width=".9"/></g>
  <g transform="translate(72.700 76)"><circle cx="4.300" cy="4.300" r="4.300" fill="#8e0a0a"/><circle cx="4.300" cy="4.300" r="2.900" fill="#fde4e4"/><rect x="3.400" y="1.600" width="1.800" height="3.400" fill="#e01818"/><rect x="3.400" y="5.600" width="1.800" height="1.500" fill="#e01818"/></g>
  <g transform="translate(53 103)"><path d="M0.500 3.500h9v9h-9z" fill="#9fdcf5" stroke="#2a87b3" stroke-width=".9"/><path d="M0.500 3.500l3-3h9l-3 3z" fill="#dff3fb" stroke="#2a87b3" stroke-width=".9"/><path d="M9.500 3.500l3-3v9l-3 3z" fill="#6fbfe0" stroke="#2a87b3" stroke-width=".9"/></g>
</svg>
<div class="t" style="left:43px;top:262px;color:#ee5555">6-30_最终缩小版.ASM</div>
<div class="t" style="left:63px;top:286px;color:#ea4040;font-weight:bold;letter-spacing:.1px">ASM0001_ASM_36.ASM</div>
<div class="t" style="left:73px;top:310px;color:#505050">6-27-002_56.PRT</div>
<div class="t" style="left:83px;top:334px;color:#ea4040;font-weight:bold;letter-spacing:.18px">6-27-001_43.PRT</div>
<div class="t" style="left:73px;top:358px;color:#505050">6-27-003_14.PRT</div>

<!-- in-graphics toolbar -->
<div class="abs" style="left:1001px;top:176px;width:297px;height:32px;background:#f8f8f8;border:1px solid #a3a3a3"></div>
<svg style="left:1001px;top:176px" width="297" height="32" viewBox="0 0 297 32">
  <defs><linearGradient id="lensg" x1="0" y1="0" x2="1" y2="1"><stop offset="0" stop-color="#ffffff"/><stop offset="1" stop-color="#d7ecf7"/></linearGradient></defs>
  <!-- refit -->
  <rect x="8.500" y="7.500" width="14" height="14" fill="#fbfbfb" stroke="#b5b5b5"/>
  <circle cx="15" cy="14" r="4.600" fill="url(#lensg)" stroke="#2a87b3" stroke-width="1.300"/><path d="M18.500 17.500 L23 22" stroke="#9a9a9a" stroke-width="2.400" stroke-linecap="round"/>
  <!-- zoom in -->
  <circle cx="40.500" cy="13.500" r="5.600" fill="url(#lensg)" stroke="#2a87b3" stroke-width="1.300"/><path d="M37.500 13.500h6M40.500 10.500v6" stroke="#0f5f86" stroke-width="1.800"/><path d="M44.700 17.700 L49.500 22.500" stroke="#9a9a9a" stroke-width="2.400" stroke-linecap="round"/>
  <!-- zoom out -->
  <circle cx="66.500" cy="13.500" r="5.600" fill="url(#lensg)" stroke="#2a87b3" stroke-width="1.300"/><path d="M63.500 13.500h6" stroke="#0f5f86" stroke-width="1.800"/><path d="M70.700 17.700 L75.500 22.500" stroke="#9a9a9a" stroke-width="2.400" stroke-linecap="round"/>
  <!-- repaint -->
  <rect x="86.500" y="7.500" width="15" height="14" fill="#eaf5fa" stroke="#a9a9a9"/><path d="M87 21 C90 12 95 9 101 8.500 L101 21Z" fill="#4fa6c9"/><path d="M88 20.500 L100 10" stroke="#1f5f80" stroke-width="1.400"/>
  <!-- rendering -->
  <path d="M119 7.500h10l3-2v11l-3 2h-10z" fill="#e9e9e9" stroke="#d0d0d0" stroke-width=".6"/><circle cx="118" cy="18" r="5" fill="#e0e0e0"/><circle cx="116.500" cy="16.500" r="2.200" fill="#fafafa"/><path d="M136.500 22 v-3.500 l-3.500 3.500z" fill="#555"/>
  <!-- display style -->
  <path d="M139.500 10.500h11v11h-11z" fill="#fff" stroke="#0f5f86" stroke-width="1.500"/><path d="M139.500 10.500l4-4h11l-4 4z" fill="#aee6f8" stroke="#0f5f86" stroke-width="1.200"/><path d="M150.500 10.500l4-4v11l-4 4z" fill="#72b4d2" stroke="#0f5f86" stroke-width="1.200"/><path d="M163 22 v-3.500 l-3.500 3.500z" fill="#555"/>
  <!-- saved orientations -->
  <path d="M166.500 9.500h10v11h-10z" fill="#f7fbfd" stroke="#a9d6ea"/><path d="M166.500 9.500l3-3h10l-3 3z M176.500 9.500l3-3v11l-3 3z" fill="#cdeaf6" stroke="#a9d6ea"/>
  <rect x="174.500" y="13.500" width="7" height="8" fill="#fdfdfd" stroke="#8f8f8f"/><path d="M176 16h4M176 18h4M176 20h4" stroke="#777" stroke-width=".8"/><path d="M190 22 v-3.500 l-3.500 3.500z" fill="#555"/>
  <!-- view manager -->
  <rect x="192.500" y="6.500" width="13" height="14" fill="#fcfcfc" stroke="#9a9a9a"/><path d="M192.500 10.500h13M192.500 13.500h13M192.500 16.500h13M196.500 10.500v10" stroke="#9a9a9a"/>
  <path d="M199.500 17.500h2l1-1.500h4l1 1.500h1.500v5.500h-9.500z" fill="#444" stroke="#222" stroke-width=".6"/><circle cx="204.300" cy="20.200" r="2" fill="#9a9a9a" stroke="#1c1c1c" stroke-width=".7"/>
  <!-- datum display -->
  <path d="M219.500 6.500l4 4m0-4l-4 4 M229 6l-2.500 5 M223.500 15l-2.500 6 M226.500 21 L233.500 10.500 M228 10.500 L232 21 M225 16h10" stroke="#8b6c1e" stroke-width="1.300" fill="none"/><path d="M244 24 v-3.500 l-3.500 3.500z" fill="#555"/>
  <!-- annotation display -->
  <rect x="246.500" y="7.500" width="9" height="5" fill="#fbedc9" stroke="#b9b9b9"/><path d="M256 8.500h6v4" fill="none" stroke="#444" stroke-width="1.200"/><path d="M259 12.500l3 3.500l3-3.500z" fill="#333"/>
  <ellipse cx="258.500" cy="20" rx="4.500" ry="2.800" fill="#fff" stroke="#333" stroke-width="1.200"/><circle cx="258.500" cy="20" r="1.500" fill="#333"/>
  <!-- spin center -->
  <path d="M274 11 L279.500 15.500 L274 20 M279.500 15.500 L285 14" stroke="#333" stroke-width="1.200" fill="none"/>
  <circle cx="273.500" cy="10" r="2.400" fill="#5aa469" stroke="#3f8a4f" stroke-width=".5"/><circle cx="273.500" cy="21" r="2.400" fill="#3a8fc0" stroke="#2a77a5" stroke-width=".5"/><circle cx="285.500" cy="14" r="2.400" fill="#e46a66" stroke="#c94d49" stroke-width=".5"/>
</svg>

<svg style="left:0;top:0" width="1914" height="1029" viewBox="0 0 1914 1029">
<defs>
<linearGradient id="bgg" gradientUnits="userSpaceOnUse" x1="0" y1="169" x2="0" y2="992"><stop offset="0" stop-color="#c5d9ea"/><stop offset="1" stop-color="#5b7bad"/></linearGradient>
<linearGradient id="rodg" x1="0" y1="0" x2="0" y2="1">
 <stop offset="0" stop-color="#474747"/><stop offset=".15" stop-color="#555"/><stop offset=".35" stop-color="#5a5a5a"/><stop offset=".55" stop-color="#4e4e4e"/><stop offset=".8" stop-color="#434343"/><stop offset=".93" stop-color="#353535"/><stop offset="1" stop-color="#262626"/></linearGradient>
<linearGradient id="hlg" x1="0" y1="0" x2="0" y2="1"><stop offset="0" stop-color="#b4b4b4" stop-opacity="0"/><stop offset=".25" stop-color="#b4b4b4" stop-opacity=".35"/><stop offset=".42" stop-color="#b6b6b6" stop-opacity=".85"/><stop offset=".58" stop-color="#b6b6b6" stop-opacity=".85"/><stop offset=".75" stop-color="#b4b4b4" stop-opacity=".35"/><stop offset="1" stop-color="#b4b4b4" stop-opacity="0"/></linearGradient>
<clipPath id="rodclip"><path d="M0 -40.300 L690 -40.300 L690 40.300 L0 40.300 A10.500 40.300 0 0 1 0 -40.300Z"/></clipPath>
<linearGradient id="rodg2" x1="0" y1="0" x2="0" y2="1">
 <stop offset="0" stop-color="#3c3c3c"/><stop offset=".2" stop-color="#4c4c4c"/><stop offset=".33" stop-color="#5e5e5e"/><stop offset=".45" stop-color="#a8a8a8"/><stop offset=".56" stop-color="#585858"/><stop offset=".7" stop-color="#464646"/><stop offset="1" stop-color="#262626"/></linearGradient>
<linearGradient id="capin" x1="0" y1="0" x2="0" y2="1"><stop offset="0" stop-color="#2e2e2e"/><stop offset=".3" stop-color="#4a4a4a"/><stop offset=".55" stop-color="#aaa"/><stop offset=".7" stop-color="#666"/><stop offset="1" stop-color="#3c3c3c"/></linearGradient>
<linearGradient id="bodyg" x1="0" y1="0" x2="1" y2="0"><stop offset="0" stop-color="#4a4a4a"/><stop offset=".25" stop-color="#363636"/><stop offset=".6" stop-color="#2b2b2b"/><stop offset="1" stop-color="#333"/></linearGradient>
<linearGradient id="rimg" x1="0" y1="0.9" x2="0.8" y2="0"><stop offset="0" stop-color="#858ed4"/><stop offset=".35" stop-color="#9098de"/><stop offset=".7" stop-color="#a4acf2"/><stop offset="1" stop-color="#b2bafc"/></linearGradient>
<linearGradient id="wallg" x1="0" y1="0.35" x2="1" y2="0.65"><stop offset="0" stop-color="#4b5385"/><stop offset=".2" stop-color="#596196"/><stop offset=".55" stop-color="#6a72ad"/><stop offset="1" stop-color="#7c84c4"/></linearGradient>
<radialGradient id="torg" gradientUnits="userSpaceOnUse" cx="1457" cy="631" r="100"><stop offset=".45" stop-color="#5c5c5c"/><stop offset=".5" stop-color="#3e3e3e"/><stop offset=".6" stop-color="#505050"/><stop offset=".7" stop-color="#424242"/><stop offset=".8" stop-color="#323232"/><stop offset=".9" stop-color="#2a2a2a"/><stop offset="1" stop-color="#272727"/></radialGradient>
<filter id="bl2" x="-20%" y="-20%" width="140%" height="140%"><feGaussianBlur stdDeviation="2.200"/></filter>
<filter id="bl1" x="-20%" y="-20%" width="140%" height="140%"><feGaussianBlur stdDeviation="1"/></filter>
<clipPath id="vpclip"><rect x="386" y="169" width="1528" height="823"/></clipPath>
</defs>
<g clip-path="url(#vpclip)">
<ellipse cx="1448" cy="628" rx="88" ry="90.500" fill="#2c2c2c"/>
<g transform="translate(446.7 529.5) rotate(5.722)">
<path d="M0 -40.300 L690 -40.300 L690 40.300 L0 40.300 A10.500 40.300 0 0 1 0 -40.300Z" fill="url(#rodg)"/>
<g clip-path="url(#rodclip)"><rect x="-14" y="-25" width="720" height="28" fill="url(#hlg)" transform="rotate(0.5 0 -11)"/></g>
<path d="M0 40.300 A10.500 40.300 0 0 1 0 -40.300" fill="none" stroke="#1c1c1c" stroke-width="1"/>
<path d="M0 -40.300 L690 -40.300 M0 40.300 L690 40.300" stroke="#222" stroke-width=".8"/>
<path d="M838 -47.300 L935 -47.300 L935 48.700 L838 48.700Z" fill="url(#rodg2)"/>
<path d="M1082 -41 L1166 -41 L1166 41 L1082 41Z" fill="url(#rodg2)"/>
<ellipse cx="1166" cy="0" rx="11.800" ry="41" fill="#2a2a2a" stroke="#1f1f1f" stroke-width=".8"/>
<ellipse cx="1166.500" cy="0.500" rx="8.600" ry="33.500" fill="url(#capin)" stroke="#222" stroke-width=".8"/>
</g>
<ellipse cx="1435.500" cy="627.800" rx="87" ry="91" fill="#606060"/>
<ellipse cx="1436.500" cy="627.800" rx="84.800" ry="89" fill="#2a2a2a"/>
<ellipse cx="1437.500" cy="627.800" rx="83" ry="87.500" fill="#585858"/>
<ellipse cx="1439" cy="628" rx="80.500" ry="85.500" fill="#2b2b2b"/>
<clipPath id="r2clip"><ellipse cx="1439" cy="628" rx="80.500" ry="85.500"/></clipPath>
<g clip-path="url(#r2clip)">
<ellipse cx="1439" cy="628" rx="82" ry="87" fill="url(#torg)"/>
<g fill="none" filter="url(#bl2)" stroke-linecap="round" opacity=".4">
<path d="M1399 620 C1403 583 1434 569.500 1461 569.500 C1488 569.500 1503 578 1512 591" stroke="#a0a0a0" stroke-width="7"/>
<path d="M1402 660 C1416 690 1444 701 1468 699 C1487 697 1499 690 1506 682" stroke="#707070" stroke-width="7"/>
</g>
<g fill="none" filter="url(#bl1)" stroke-linecap="round">
<path d="M1401 616 C1406 584 1436 570 1461 570 C1486 570 1500 578 1508 589" stroke="#b0b0b0" stroke-width="2.400"/>
<path d="M1403 661 C1418 690 1444 700 1467 699 C1485 697.500 1496 691 1502 684" stroke="#7e7e7e" stroke-width="2.400"/>
<path d="M1397.800 642 C1396.300 627 1397.500 612 1401.500 600" stroke="#777" stroke-width="2.400"/>
</g>
<clipPath id="lens"><path d="M1388 581 C1391 602 1388 640 1380.500 663 C1366 660 1352 640 1353 618 C1354 604 1358 596 1364 590 Z"/></clipPath>
<g clip-path="url(#lens)">
<g transform="translate(446.7 529.5) rotate(5.722)"><path d="M890 -43 L960 -43 L960 45 L890 45Z" fill="url(#rodg2)"/></g>
<path d="M1378 588 C1381 606 1378 640 1372 658" fill="none" stroke="#2a2a2a" stroke-width="1.200"/>
</g>
<path d="M1388 581 C1391 602 1388 640 1380.500 663 M1364 590 L1388 581" fill="none" stroke="#262626" stroke-width="1.300"/>
</g>
<ellipse cx="1455.300" cy="631.300" rx="46.800" ry="48.800" fill="#7c7c7c"/>
<ellipse cx="1455.800" cy="631.300" rx="45.700" ry="47.800" fill="#262626"/>
<ellipse cx="1457.700" cy="631.300" rx="42.600" ry="45.500" fill="url(#bgg)" stroke="#2b2b2b" stroke-width="1"/>
<path d="M1111.0 579.7 L1111.6 573.0 L1112.8 566.2 L1114.7 559.6 L1117.3 553.1 L1120.5 546.8 L1124.3 540.7 L1128.7 534.9 L1133.7 529.4 L1139.1 524.2 L1145.1 519.5 L1151.5 515.2 L1158.2 511.4 L1165.3 508.1 L1172.7 505.4 L1180.3 503.1 L1188.0 501.5 L1195.9 500.4 L1203.7 499.9 L1211.6 500.0 L1219.4 500.7 L1227.1 501.9 L1234.5 503.8 L1241.7 506.2 L1248.6 509.1 L1255.2 512.6 L1261.3 516.5 L1267.0 520.9 L1272.1 525.8 L1276.8 531.0 L1280.8 536.6 L1284.3 542.5 L1287.1 548.7 L1289.3 555.1 L1290.8 561.6 L1291.6 568.3 L1291.8 575.1 L1288.5 628.8 L1287.5 635.6 L1285.9 642.3 L1283.8 648.8 L1281.0 655.2 L1277.6 661.3 L1273.7 667.1 L1269.4 672.6 L1264.5 677.7 L1259.2 682.3 L1253.5 686.5 L1247.4 690.3 L1241.1 693.5 L1234.4 696.2 L1227.6 698.3 L1220.6 699.8 L1213.5 700.8 L1206.4 701.1 L1199.3 700.9 L1192.2 700.0 L1185.2 698.6 L1178.4 696.6 L1171.8 694.0 L1165.5 690.9 L1159.5 687.2 L1153.9 683.1 L1148.7 678.5 L1143.9 673.5 L1139.6 668.1 L1135.8 662.3 L1132.5 656.3 L1129.8 649.9 L1113.5 599.7 L1112.0 593.2 L1111.2 586.5Z" fill="url(#bodyg)"/>
<ellipse cx="1201.4" cy="577.4" rx="90.8" ry="77.1" transform="rotate(-10 1201.4 577.4)" fill="#838cd4"/>
<ellipse cx="1201.4" cy="577.4" rx="87.6" ry="74.3" transform="rotate(-10 1201.4 577.4)" fill="#10101a"/>
<ellipse cx="1201.4" cy="577.4" rx="86.39999999999999" ry="73.19999999999999" transform="rotate(-10 1201.4 577.4)" fill="url(#rimg)"/>
<clipPath id="wallclip"><ellipse cx="1200.800" cy="579.700" rx="69" ry="61" transform="rotate(-10 1200.800 579.700)"/></clipPath>
<ellipse cx="1200.8" cy="579.7" rx="69" ry="61" transform="rotate(-10 1200.8 579.7)" fill="url(#wallg)" filter="url(#bl1)"/>
<g clip-path="url(#wallclip)">
<ellipse cx="1222" cy="545" rx="40" ry="22" fill="#7a83c2" opacity=".35" filter="url(#bl2)"/>
<ellipse cx="1212" cy="616" rx="52.500" ry="45" fill="#454b78" stroke="#12121a" stroke-width="1"/>
<ellipse cx="1212.800" cy="619.500" rx="50" ry="43.500" fill="#2c2c2c" stroke="#15151c" stroke-width=".8"/>
<ellipse cx="1213.400" cy="621.800" rx="47.800" ry="40.800" fill="#8c8c8c"/>
<ellipse cx="1213.800" cy="623.600" rx="46" ry="39" fill="#2a2a2a"/>
<ellipse cx="1214.200" cy="625.500" rx="43.800" ry="37" fill="url(#bgg)" stroke="#1c1c1c" stroke-width="1"/>
</g>
</g></svg>

<!-- notification popup -->
<div class="abs" style="left:1496px;top:871px;width:416px;height:121px;background:#f4f5f7"></div>
<div class="abs" style="left:1496px;top:954px;width:416px;height:38px;background:#edeef0"></div>
<div class="abs" style="left:1497px;top:909px;width:414px;height:1px;background:#bdbdbd"></div>
<div class="abs" style="left:1497px;top:953px;width:414px;height:1px;background:#c6c6c6"></div>
<svg style="left:1506px;top:880px" width="18" height="20" viewBox="0 0 18 20">
  <path d="M2.800 1.500v16" stroke="#8a8a8a" stroke-width="1.300"/><path d="M3.500 1.800 L14.500 5.500 L3.500 10.500Z" fill="#e8322c"/><path d="M3.500 1.800 L14.500 5.500 L9 6.500Z" fill="#f26a5e"/>
</svg>
<div class="t" style="left:1543px;top:884px;font-weight:bold;color:#1c1c1c">3 通知</div>
<svg style="left:1869px;top:881px" width="40" height="18" viewBox="0 0 40 18">
  <path d="M1.500 1.500h8l4 4v11h-12z" fill="#fbfcfd" stroke="#b9b9b9"/><path d="M9.500 1.500v4h4" fill="#dfe8ee" stroke="#b9b9b9" stroke-width=".7"/>
  <g fill="none" stroke="#777" stroke-width=".8"><circle cx="4.500" cy="9" r="1"/><circle cx="4.500" cy="13" r="1"/><path d="M7 9h5M7 13h5"/></g>
  <path d="M26.500 5 L33.500 12 M33.500 5 L26.500 12" stroke="#1c1c1c" stroke-width="1.400"/>
</svg>
<div class="t" style="left:1510px;top:925px;color:#444">3 导入校验失败</div>
<div class="t" style="left:1668px;top:967px;color:#2e6c99">打开通知中心</div>

<!-- status bar -->
<div class="abs" style="left:0;top:992px;width:1914px;height:2px;background:#9b9b9b"></div>
<div class="abs" style="left:0;top:994px;width:1914px;height:1px;background:#e1e2e4"></div>
<div class="abs" style="left:6px;top:1004px;width:22px;height:22px;background:#e3e4e6;border:1px solid #b3b3b3"></div>
<svg style="left:0;top:996px" width="100" height="33" viewBox="0 0 100 33">
  <g fill="#fafafa" stroke="#2b2b2b" stroke-width="1.100"><rect x="14.500" y="12.500" width="2.800" height="2.800"/><rect x="14.500" y="17.500" width="2.800" height="2.800"/><rect x="14.500" y="23" width="2.800" height="2.800"/><rect x="21.500" y="17.500" width="2.800" height="2.800"/></g>
  <path d="M16 15.500v2M16 20.500v2.500M17.500 19h4" stroke="#2b2b2b" stroke-width="1"/>
  <defs><radialGradient id="glb" cx="40%" cy="35%" r="70%"><stop offset="0" stop-color="#8fd4f5"/><stop offset="1" stop-color="#1f7fc0"/></radialGradient></defs>
  <circle cx="43" cy="18.500" r="6.800" fill="url(#glb)"/><path d="M39 15c2-1 4 0 4 2s3 1 3 3-2 3-4 3" fill="none" stroke="#bfe6fa" stroke-width="1.400"/>
  <ellipse cx="43" cy="18.500" rx="9" ry="4" fill="none" stroke="#555" stroke-width="1.100" transform="rotate(-35 43 18.500)"/>
  <defs><linearGradient id="sqg" x1="0" y1="0" x2="0" y2="1"><stop offset="0" stop-color="#fdfefe"/><stop offset="1" stop-color="#c5dbe8"/></linearGradient></defs>
  <rect x="61.500" y="11.500" width="15" height="15" rx="1" fill="url(#sqg)" stroke="#2a77a5" stroke-width="1.200"/>
  <rect x="89" y="8" width="1" height="22" fill="#b9b9b9"/>
</svg>
<div class="abs" style="left:1489px;top:996px;width:1px;height:30px;background:#b9b9b9"></div>
<div class="abs" style="left:1530px;top:996px;width:1px;height:30px;background:#b9b9b9"></div>
<div class="abs" style="left:1577px;top:996px;width:1px;height:30px;background:#b9b9b9"></div>
<svg style="left:1495px;top:1000px" width="20" height="22" viewBox="0 0 20 22">
  <path d="M3 2.500v15" stroke="#8a8a8a" stroke-width="1.300"/><path d="M3.700 2.800 L14 6.500 L3.700 11Z" fill="#e8322c"/><path d="M3.700 2.800 L14 6.500 L9 7.300Z" fill="#f26a5e"/>
  <text x="6.500" y="19.500" font-family="Liberation Sans,sans-serif" font-size="9.500" font-weight="bold" fill="#1a1acc">3</text>
</svg>
<div class="abs" style="left:1533px;top:998px;width:42px;height:24px;background:#f5f6f8;border:1px solid #c6c6c6"></div>
<div class="abs" style="left:1559px;top:999px;width:1px;height:22px;background:#cfcfcf"></div>
<svg style="left:1533px;top:998px" width="42" height="24" viewBox="0 0 42 24">
  <defs><linearGradient id="bino2" x1="0" x2="1"><stop offset="0" stop-color="#2b2b2b"/><stop offset=".5" stop-color="#8a8a8a"/><stop offset="1" stop-color="#2b2b2b"/></linearGradient></defs>
  <path d="M8 4h4v3l1 2h2l1-2v-3h4v3l2.500 8v4h-6.500v-5h-2.500v5h-6.500v-4l3-8z" fill="url(#bino2)" stroke="#1f1f1f" stroke-width=".6"/>
  <path d="M30.500 10.500 L38.500 10.500 L34.500 14.500 Z" fill="#555"/>
</svg>
<div class="abs" style="left:1580px;top:998px;width:40px;height:28px;background:#f5f6f8;border:1px solid #c6c6c6"></div>
<svg style="left:1590px;top:1002px" width="20" height="20" viewBox="0 0 20 20">
  <path d="M1.500 5.500h13v13h-13z M1.500 5.500l4-4h13l-4 4 M14.500 18.500l4-4v-13" fill="none" stroke="#333" stroke-width="1.100"/>
  <rect x="4.500" y="8.500" width="7" height="7" fill="#fbe6b8" stroke="#c9a25a" stroke-width=".8"/><rect x="6.500" y="6.500" width="6" height="6" fill="#a9def4" stroke="#2a87b3" stroke-width=".8"/>
</svg>
<div class="abs" style="left:1717px;top:1000px;width:177px;height:24px;background:#f9fafb;border:1px solid #c6c6c6"></div>
<div class="abs" style="left:1878px;top:1001px;width:1px;height:22px;background:#cfcfcf"></div>
<div class="t" style="left:1725px;top:1005px;color:#333">几何</div>
<div class="arr" style="left:1882px;top:1011px"></div>
<svg style="left:1896px;top:1012px" width="18" height="17" viewBox="0 0 18 17"><path d="M16 4 L4 16 M16 8 L8 16 M16 12 L12 16" stroke="#b5b5b5" stroke-width="1.200"/></svg>
<!-- watermark -->
<div class="abs" style="left:1703px;top:963px;width:206px;height:60px;background:rgba(255,255,255,.22)"></div>
<svg style="left:1700px;top:960px" width="70" height="64" viewBox="0 0 70 64">
  <g fill="none" stroke-linecap="round">
  <ellipse cx="25" cy="22" rx="21" ry="12.500" transform="rotate(35 25 22)" stroke="#8ea0b4" stroke-opacity=".55" stroke-width="3"/>
  <path d="M48 24 C56 20 64 26 58 40 C54 50 46 58 38 59" stroke="#e0605c" stroke-opacity=".6" stroke-width="3.200"/>
  <path d="M48 24 C42 28 38 34 36 40" stroke="#d99" stroke-opacity=".45" stroke-width="1.600"/>
  <ellipse cx="21" cy="44" rx="10" ry="6" transform="rotate(-35 21 44)" stroke="#9fb0c2" stroke-opacity=".5" stroke-width="2.200"/>
  </g>
</svg>
<div class="t" style="left:1773px;top:968px;font-size:29px;line-height:30px;font-weight:bold;font-family:'Noto Serif CJK SC','Noto Sans CJK SC',serif;color:rgba(90,190,140,.55);letter-spacing:0px">野火论坛</div>
<div class="t" style="left:1761px;top:1000px;font-size:17px;line-height:22px;color:rgba(120,200,200,.4);letter-spacing:-0.360px">www.proewildfire.cn</div>

<div class="abs" style="left:0;top:0;width:80px;height:15px;background:#fff"></div>
<div class="t" style="left:1px;top:0px;font-size:13px;line-height:14px;font-weight:bold;color:#000;font-family:'Liberation Sans',sans-serif;letter-spacing:0.550px;word-spacing:-0.500px">1914 × 1029</div>

</body>
</html>
